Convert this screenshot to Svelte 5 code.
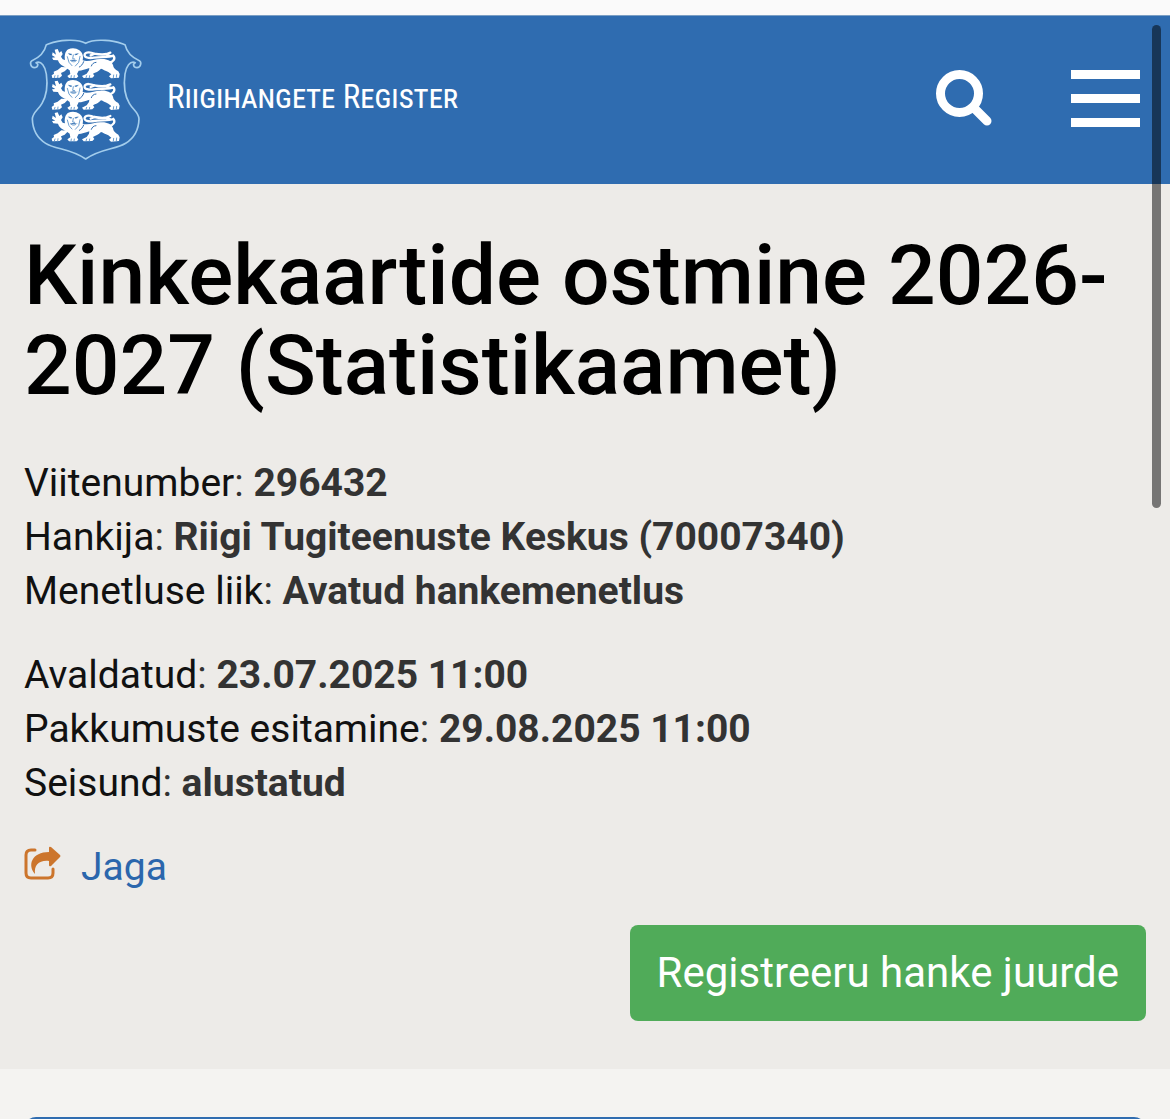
<script lang="ts">
  type Detail = { label: string; value: string };

  const title = 'Kinkekaartide ostmine 2026-2027 (Statistikaamet)';

  const groups: Detail[][] = [
    [
      { label: 'Viitenumber', value: '296432' },
      { label: 'Hankija', value: 'Riigi Tugiteenuste Keskus (70007340)' },
      { label: 'Menetluse liik', value: 'Avatud hankemenetlus' },
    ],
    [
      { label: 'Avaldatud', value: '23.07.2025 11:00' },
      { label: 'Pakkumuste esitamine', value: '29.08.2025 11:00' },
      { label: 'Seisund', value: 'alustatud' },
    ],
  ];

  const lions = [0, 95, 190];
</script>

<div class="page">
  <header class="topbar">
    <a class="brand" href="#home">
      <svg class="crest" viewBox="24 24 348 372" aria-hidden="true">
        <g fill="none" stroke="#a3cdec" stroke-width="5" stroke-linejoin="round">
          <path d="M197 40C176 28 158 31 138 31C112 31 96 38 79 44C74 66 57 83 36 92C28 97 32 113 43 113C54 113 57 101 48 98C64 91 76 110 79 132C84 168 79 198 66 220C54 241 38 247 37 267C38 298 53 325 77 340C108 359 151 355 197 387C243 355 286 359 317 340C341 325 356 298 357 267C356 247 340 241 328 220C315 198 310 168 315 132C318 110 330 91 346 98C337 101 340 113 351 113C362 113 366 97 358 92C337 83 320 66 315 44C298 38 282 31 256 31C236 31 218 28 197 40Z" />
        </g>
        {#each lions as y}
          <g transform="translate(0 {y})">
            <path
              fill="#fff"
              d="M139 112C127 110 117 101 114 91L100 90L96 83L106 82L96 76L98 67L108 74L104 59L113 57L118 68L124 63L128 72L123 80L128 88L135 90C133 77 135 64 145 58C155 53 169 54 178 61C188 68 191 80 188 91C205 97 223 87 241 87C259 85 275 92 279 105C280 113 285 119 295 124L299 132L297 143L273 145L267 139L274 133L265 126C255 122 249 118 243 116C236 125 226 127 219 131L223 137L217 143L191 144L186 138L200 131L207 121L208 114C196 118 185 122 176 122L171 132L175 139L170 144L147 144L142 138L151 132L149 121L142 116L134 124L123 129L126 137L119 143L97 144L95 136L102 131L101 125L113 120L124 111Z"
            />
            <path
              fill="none"
              stroke="#fff"
              stroke-width="7"
              stroke-linecap="round"
              d="M267 98C281 96 287 85 280 77C267 83 244 80 222 83C206 86 191 82 194 73C198 64 214 67 222 71C239 74 249 75 260 72L271 68M257 73L273 79M224 71L212 76"
            />
            <path
              fill="none"
              stroke="#6c9fd0"
              stroke-width="3"
              stroke-linecap="round"
              d="M146 71L155 73M165 73L174 71M160 75L158 86L164 87M151 91C157 97 165 97 170 91M142 80L147 97L156 107M180 79L176 97L166 108M105 137L103 143M114 136L113 143M154 137L153 143M163 137L162 143M200 137L198 143M209 137L208 143M281 135L280 143M290 134L289 142"
            />
            <path
              fill="none"
              stroke="#2f6cb0"
              stroke-width="3"
              stroke-linecap="round"
              d="M149 73L153 74M167 74L171 73M155 91L166 91M191 95C188 103 184 108 178 111M214 108C216 102 221 97 228 97"
            />
          </g>
        {/each}
      </svg>
      <span class="brand-name">Riigihangete Register</span>
    </a>

    <div class="actions">
      <button class="icon-button" type="button" aria-label="Otsi">
        <svg width="56" height="56" viewBox="0 0 56 56" fill="none" stroke="#fff" aria-hidden="true">
          <circle cx="23.5" cy="23.5" r="19" stroke-width="9" />
          <path d="M38 38L51 51" stroke-width="9" stroke-linecap="round" />
        </svg>
      </button>
      <button class="icon-button" type="button" aria-label="Menüü">
        <svg width="69" height="57" viewBox="0 0 69 57" fill="#fff" aria-hidden="true">
          <path d="M0 0H69V9H0ZM0 24H69V33H0ZM0 48H69V57H0Z" />
        </svg>
      </button>
    </div>
  </header>

  <main class="summary">
    <h1>{title}</h1>

    {#each groups as group}
      <div class="details">
        {#each group as { label, value }}
          <div class="detail"><span>{label}</span>: <strong>{value}</strong></div>
        {/each}
      </div>
    {/each}

    <a class="share" href="#jaga">
      <svg width="36" height="34" viewBox="0 0 36 34" aria-hidden="true">
        <path
          d="M11 3H7Q2 3 2 8V26Q2 31 7 31H24Q29 31 29 26V22"
          fill="none"
          stroke="#cc752c"
          stroke-width="3"
          stroke-linecap="round"
        />
        <path
          d="M25 1Q25-1 27 0L36 8Q37 9 36 10L27 19Q25 20 25 18V14C15 13 10 18 11 27C3 18 8 5 25 5Z"
          fill="#cc752c"
        />
      </svg>
      <span>Jaga</span>
    </a>

    <div class="register">
      <button class="register-button" type="button">Registreeru hanke juurde</button>
    </div>
  </main>

  <section class="content">
    <div class="panel"></div>
  </section>

  <div class="scroll-thumb"></div>
</div>

<style>
  :global(body) {
    margin: 0;
    background: #f4f3f1;
  }

  .page {
    position: relative;
    border-top: 15px solid #fafafa;
    font-family: Roboto, 'Liberation Sans', sans-serif;
    font-size: 39px;
    line-height: 54px;
    color: #333;
  }

  .topbar {
    display: flex;
    align-items: center;
    justify-content: space-between;
    box-sizing: border-box;
    height: 169px;
    padding: 0 30px 0 28px;
    background: #2f6cb0;
    box-shadow: inset 0 1px #7b9fc4;
  }

  .brand {
    display: flex;
    align-items: center;
    gap: 23px;
    color: #fff;
    text-decoration: none;
  }

  .crest {
    width: 116px;
    height: 124px;
  }

  .brand-name {
    padding-bottom: 6px;
    font-family: 'Roboto Condensed', Roboto, sans-serif;
    font-size: 33px;
    line-height: 40px;
    font-variant: small-caps;
    white-space: nowrap;
  }

  .actions {
    display: flex;
    align-items: center;
    gap: 79px;
    padding-bottom: 3px;
  }

  .icon-button {
    display: flex;
    padding: 0;
    border: 0;
    background: none;
    cursor: pointer;
  }

  .icon-button svg {
    overflow: visible;
  }

  .summary {
    padding: 47px 24px 48px;
    background: #edebe8;
  }

  h1 {
    margin: 0 0 45px;
    font-size: 84px;
    line-height: 90px;
    font-weight: 500;
    color: #000;
  }

  .details {
    margin-bottom: 30px;
  }

  .detail span {
    color: #111;
  }

  strong {
    font-weight: 700;
  }

  .share {
    display: flex;
    align-items: center;
    gap: 21px;
    width: fit-content;
    color: #2b66ac;
    text-decoration: none;
  }

  .share svg {
    padding-bottom: 6px;
    overflow: visible;
  }

  .register {
    display: flex;
    justify-content: flex-end;
    margin-top: 31px;
  }

  .register-button {
    padding: 18px 27px;
    border: 0;
    border-radius: 8px;
    background: #50ab59;
    color: #fff;
    font: inherit;
    font-size: 42px;
    line-height: 60px;
    cursor: pointer;
  }

  .content {
    padding: 48px 24px 0;
    background: #f4f3f1;
  }

  .panel {
    height: 12px;
    margin-bottom: -10px;
    border-radius: 12px 12px 0 0;
    background: #2f6cb0;
  }

  .scroll-thumb {
    position: absolute;
    top: 10px;
    right: 9px;
    width: 9px;
    height: 483px;
    border-radius: 5px;
    background: rgba(0, 0, 0, 0.5);
  }
</style>
